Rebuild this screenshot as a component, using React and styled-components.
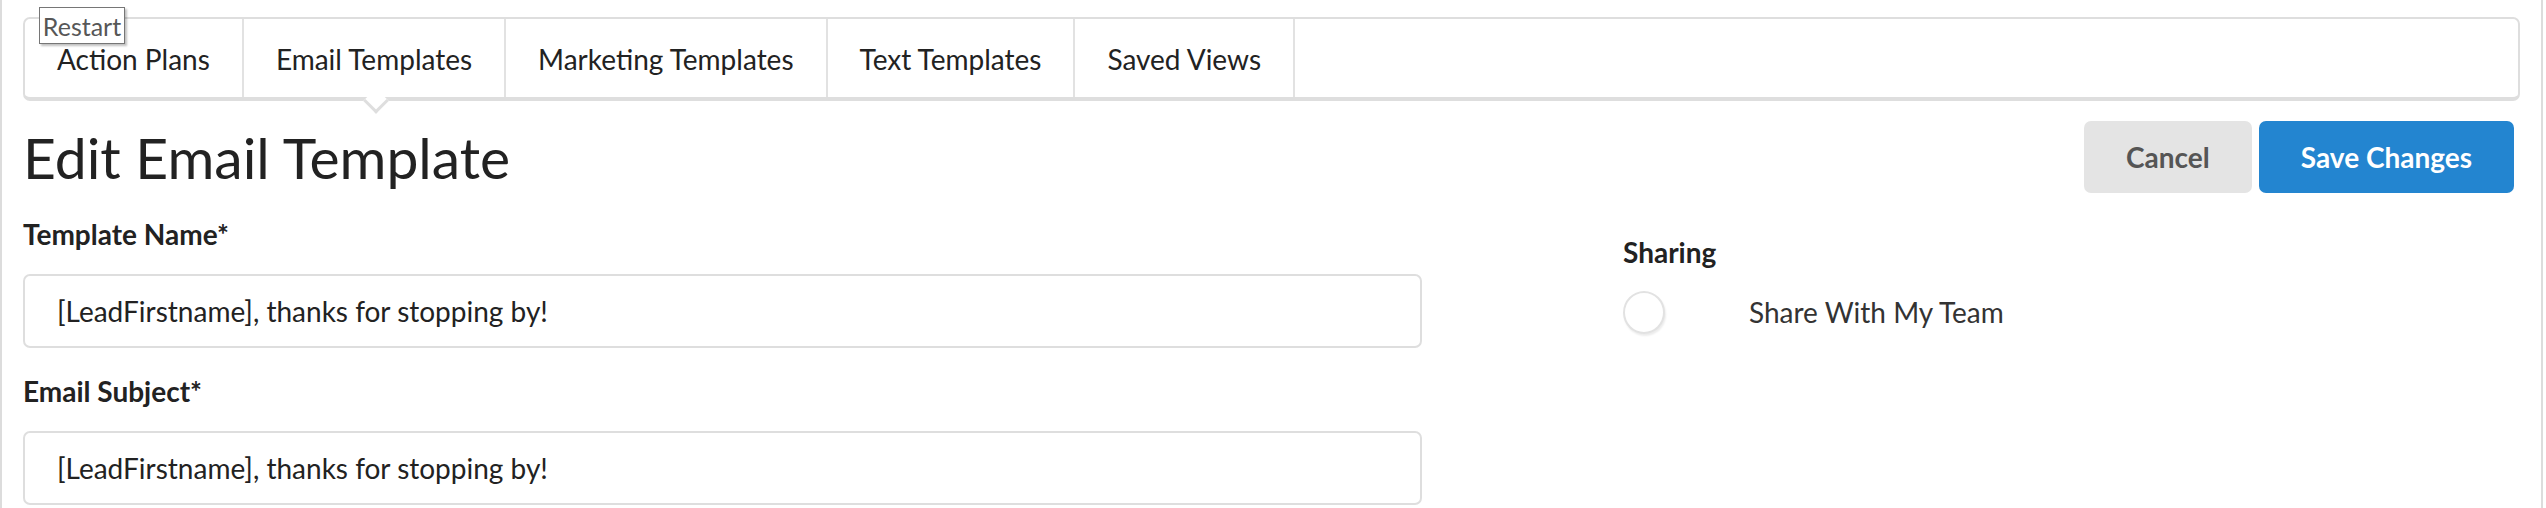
import React from "react";
import styled, { createGlobalStyle } from "styled-components";

const GlobalStyle = createGlobalStyle`
  html, body {
    margin: 0;
    padding: 0;
    background: #fff;
  }
  body {
    font-family: "Lato", "Open Sans", sans-serif;
    color: #222;
  }
  * { box-sizing: border-box; }
`;

const Frame = styled.div`
  position: relative;
  width: 2543px;
  min-height: 508px;
  border-left: 2px solid #dcdcdc;
  border-right: 2px solid #dcdcdc;
  padding: 17px 21px 0 21px;
`;

const Tooltip = styled.div`
  position: absolute;
  left: 37px;
  top: 7px;
  width: 86px;
  height: 37px;
  display: flex;
  align-items: center;
  justify-content: center;
  background: #fff;
  border: 1px solid #767676;
  box-shadow: 2px 2px 2px rgba(0, 0, 0, 0.25);
  color: #575757;
  font-size: 25px;
  z-index: 5;
`;

const TabBar = styled.nav`
  display: flex;
  height: 84px;
  border: 2px solid #dedede;
  border-bottom-width: 4px;
  border-radius: 7px;
  background: #fff;
`;

const Tab = styled.div`
  position: relative;
  display: flex;
  align-items: center;
  padding: 2px 32px 0;
  border-right: 2px solid #e2e2e2;
  font-size: 28px;
  color: #222;
  cursor: pointer;

  ${({ $active }) =>
    $active &&
    `
    &::after {
      content: "";
      position: absolute;
      left: 50%;
      bottom: -13px;
      width: 15px;
      height: 15px;
      margin-left: -7px;
      background: #fff;
      border-right: 3px solid #dedede;
      border-bottom: 3px solid #dedede;
      transform: rotate(45deg);
    }
  `}
`;

const TitleRow = styled.div`
  display: flex;
  align-items: center;
  justify-content: space-between;
  margin-top: 20px;
  padding-right: 6px;
`;

const Title = styled.h1`
  margin: 0;
  font-size: 57px;
  font-weight: 400;
  color: #222;
  line-height: 72px;
`;

const Actions = styled.div`
  display: flex;
  gap: 7px;
`;

const Button = styled.button`
  height: 72px;
  padding: 0 42px;
  border: none;
  border-radius: 7px;
  font-family: "Lato", sans-serif;
  font-size: 28px;
  font-weight: 700;
  background: ${({ $primary }) => ($primary ? "#2385d0" : "#e4e4e4")};
  color: ${({ $primary }) => ($primary ? "#fff" : "#555")};
  cursor: pointer;
`;

const FormGrid = styled.div`
  display: grid;
  grid-template-columns: 1399px 1fr;
  column-gap: 201px;
  margin-top: 24px;
`;

const Column = styled.div`
  display: flex;
  flex-direction: column;
  padding-top: ${({ $offset }) => $offset || 0};
`;

const Field = styled.div`
  display: flex;
  flex-direction: column;
  margin-bottom: 26px;
`;

const Label = styled.label`
  font-size: 28px;
  font-weight: 700;
  line-height: 34px;
  color: #222;
  margin-bottom: ${({ $gap }) => $gap || "23px"};
`;

const Input = styled.input`
  height: 74px;
  width: 100%;
  padding: 0 32px;
  border: 2px solid #dedede;
  border-radius: 7px;
  background: #fff;
  font-family: "Lato", sans-serif;
  font-size: 28px;
  color: #222;
  outline: none;
`;

const ToggleRow = styled.div`
  display: flex;
  align-items: center;
  gap: 16px;
`;

const SwitchTrack = styled.span`
  display: flex;
  align-items: center;
  width: 110px;
  height: 44px;
`;

const Knob = styled.span`
  width: 42px;
  height: 43px;
  border-radius: 50%;
  border: 2px solid #e2e2e2;
  background: #fff;
  box-shadow: 1px 2px 2px rgba(0, 0, 0, 0.08);
`;

const ToggleText = styled.span`
  font-size: 28px;
  color: #333;
`;

const tabs = [
  "Action Plans",
  "Email Templates",
  "Marketing Templates",
  "Text Templates",
  "Saved Views",
];

const App = () => {
  return (
    <>
      <GlobalStyle />
      <Frame>
        <Tooltip>Restart</Tooltip>
        <TabBar>
          {tabs.map((t) => (
            <Tab key={t} $active={t === "Email Templates"}>
              {t}
            </Tab>
          ))}
        </TabBar>

        <TitleRow>
          <Title>Edit Email Template</Title>
          <Actions>
            <Button>Cancel</Button>
            <Button $primary>Save Changes</Button>
          </Actions>
        </TitleRow>

        <FormGrid>
          <Column>
            <Field>
              <Label>Template Name*</Label>
              <Input defaultValue="[LeadFirstname], thanks for stopping by!" />
            </Field>
            <Field>
              <Label>Email Subject*</Label>
              <Input defaultValue="[LeadFirstname], thanks for stopping by!" />
            </Field>
          </Column>
          <Column $offset="18px">
            <Label $gap="21px">Sharing</Label>
            <ToggleRow>
              <SwitchTrack>
                <Knob />
              </SwitchTrack>
              <ToggleText>Share With My Team</ToggleText>
            </ToggleRow>
          </Column>
        </FormGrid>
      </Frame>
    </>
  );
};

export default App;
